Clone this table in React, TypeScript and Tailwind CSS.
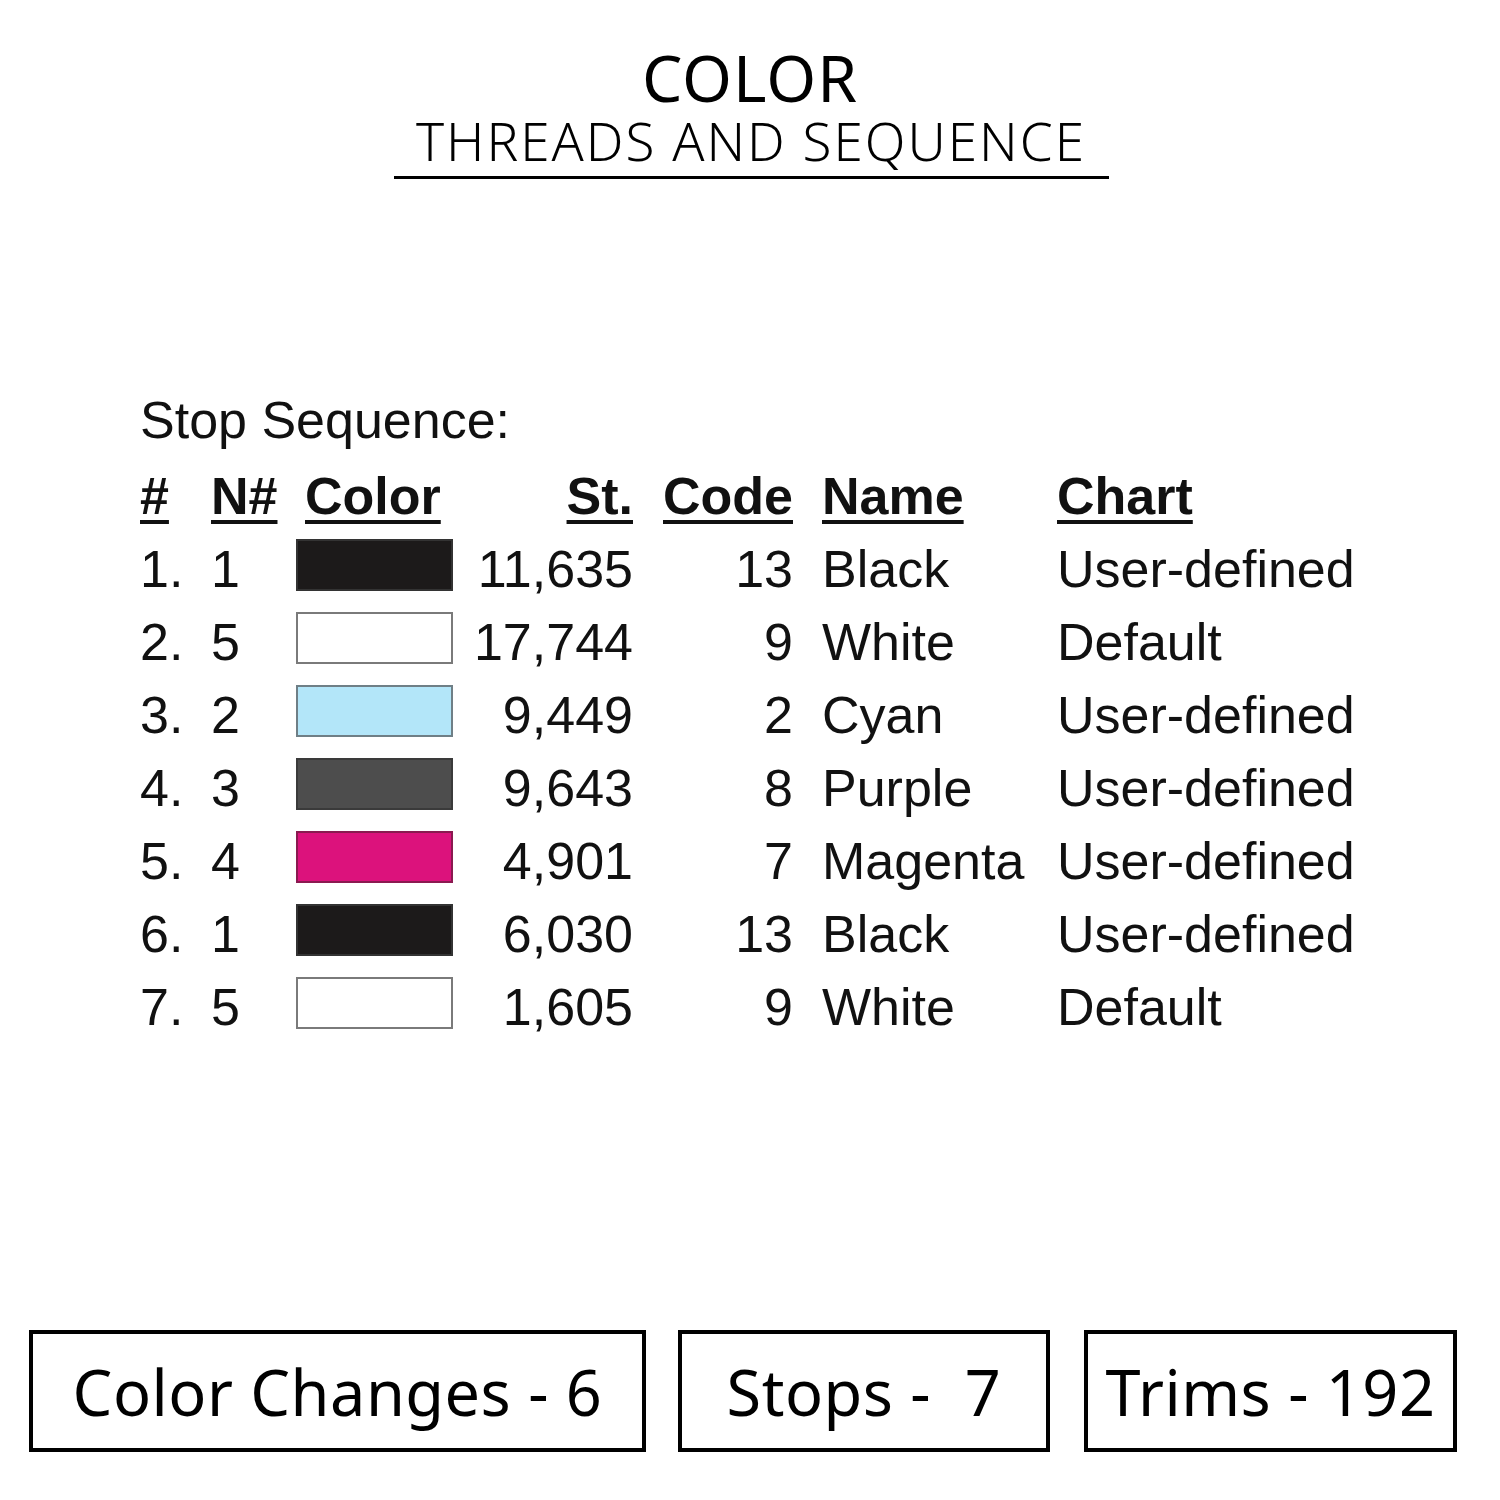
const rows = [
  { n: '1.', needle: '1', color: 'bg-[#1c1a1a] border-[#333]', st: '11,635', code: '13', name: 'Black', chart: 'User-defined' },
  { n: '2.', needle: '5', color: 'bg-white border-[#7a7a7a]', st: '17,744', code: '9', name: 'White', chart: 'Default' },
  { n: '3.', needle: '2', color: 'bg-[#b3e6f9] border-[#6f7f86]', st: '9,449', code: '2', name: 'Cyan', chart: 'User-defined' },
  { n: '4.', needle: '3', color: 'bg-[#4d4d4d] border-[#3a3a3a]', st: '9,643', code: '8', name: 'Purple', chart: 'User-defined' },
  { n: '5.', needle: '4', color: 'bg-[#dc127c] border-[#8a1a50]', st: '4,901', code: '7', name: 'Magenta', chart: 'User-defined' },
  { n: '6.', needle: '1', color: 'bg-[#1c1a1a] border-[#333]', st: '6,030', code: '13', name: 'Black', chart: 'User-defined' },
  { n: '7.', needle: '5', color: 'bg-white border-[#7a7a7a]', st: '1,605', code: '9', name: 'White', chart: 'Default' },
];

const cols = 'grid grid-cols-[71px_85px_157px_180px_160px_264px_1fr]';
const head = 'font-bold underline decoration-[4px] underline-offset-[6px]';

function StatBox({ label, className }: { label: string; className: string }) {
  return (
    <div className={`h-[122px] border-[4px] border-black flex items-center justify-center ${className}`}>
      <span className="text-[63px] leading-none text-black tracking-[0.5px] [font-family:'Noto_Sans',sans-serif]">{label}</span>
    </div>
  );
}

export default function App() {
  return (
    <div className="w-[1500px] h-[1500px] bg-white relative overflow-hidden">
      <div className="flex flex-col items-center pt-[46px]">
        <h1 className="text-[64px] leading-[64px] font-normal tracking-[1px] text-black [font-family:'Noto_Sans',sans-serif]">COLOR</h1>
        <div className="w-[715px] border-b-[3px] border-black text-center pb-[6px] mt-[2px] ml-[2px]">
          <span className="text-[53px] leading-[58px] font-light tracking-[2px] text-black [font-family:'Noto_Sans',sans-serif]">
            THREADS AND SEQUENCE
          </span>
        </div>
      </div>

      <div className="ml-[140px] mt-[205px] text-[52px] leading-[73px] text-[#111] [font-family:'Liberation_Sans',Arial,sans-serif]">
        <div className="mb-[3px]">Stop Sequence:</div>
        <div className={cols}>
          <div><span className={head}>#</span></div>
          <div><span className={head}>N#</span></div>
          <div className="pl-[9px]"><span className={head}>Color</span></div>
          <div className="text-right"><span className={head}>St.</span></div>
          <div className="text-right"><span className={head}>Code</span></div>
          <div className="pl-[29px]"><span className={head}>Name</span></div>
          <div><span className={head}>Chart</span></div>
        </div>
        {rows.map((r, i) => (
          <div key={i} className={cols}>
            <div>{r.n}</div>
            <div>{r.needle}</div>
            <div className="pt-[6px]">
              <div className={`w-[157px] h-[52px] border-2 ${r.color}`} />
            </div>
            <div className="text-right">{r.st}</div>
            <div className="text-right">{r.code}</div>
            <div className="pl-[29px] whitespace-nowrap">{r.name}</div>
            <div className="whitespace-nowrap">{r.chart}</div>
          </div>
        ))}
      </div>

      <div className="absolute left-0 right-0 top-[1330px] flex pl-[29px]">
        <StatBox label="Color Changes - 6" className="w-[617px]" />
        <StatBox label="Stops -  7" className="w-[372px] ml-[32px] whitespace-pre" />
        <StatBox label="Trims - 192" className="w-[373px] ml-[34px]" />
      </div>
    </div>
  );
}
